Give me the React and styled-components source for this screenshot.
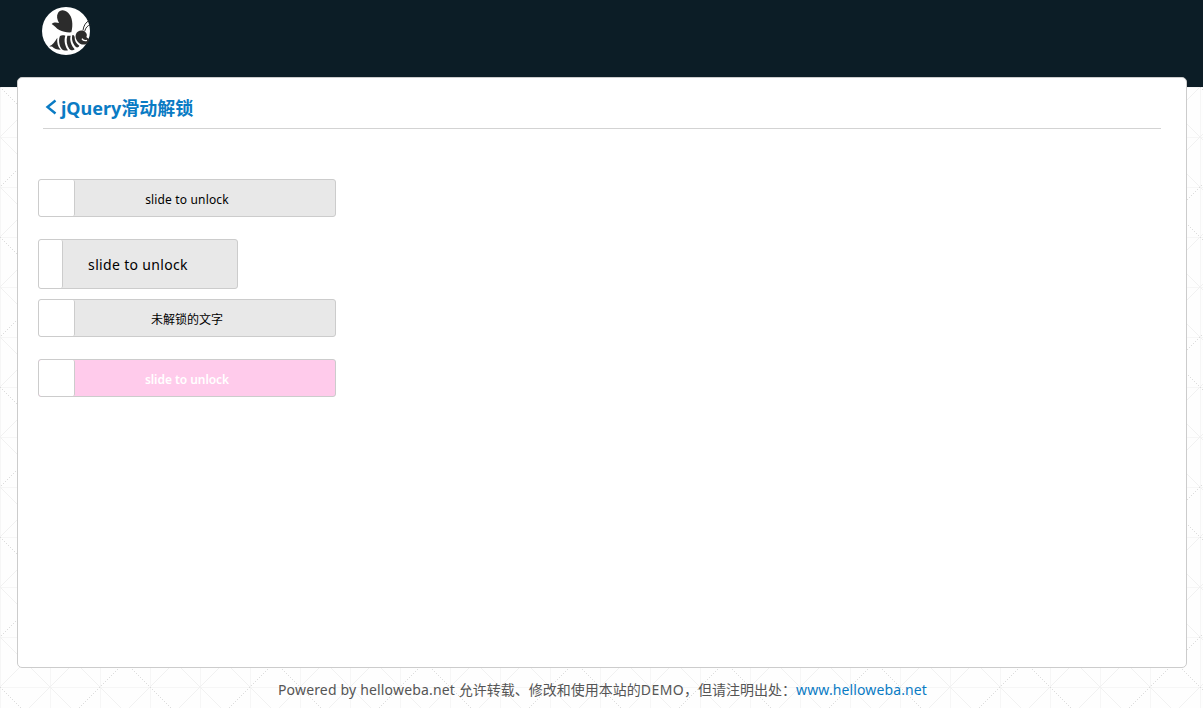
import React from "react";
import styled, { createGlobalStyle } from "styled-components";

const GlobalStyle = createGlobalStyle`
  * { box-sizing: border-box; }
  body {
    margin: 0;
    background: #fefefe;
    color: #555;
    font-family: "Noto Sans", "Noto Sans CJK SC", sans-serif;
    font-size: 14px;
    overflow: hidden;
  }
`;

const Page = styled.div`
  position: relative;
  height: 708px;
  overflow: hidden;
`;

const Backdrop = styled.svg`
  position: absolute;
  inset: 0;
  width: 100%;
  height: 100%;
`;

const Header = styled.header`
  position: relative;
  height: 87px;
  padding: 7px 42px;
  background: #0c1d26;
`;

const Logo = styled.svg`
  display: block;
  width: 49px;
  height: 48px;
`;

const Panel = styled.main`
  position: relative;
  height: 591px;
  margin: -10px 16px 0 17px;
  padding: 17px 25px 0 20px;
  background: #fff;
  border: 1px solid #ccc;
  border-radius: 5px;
`;

const Title = styled.h1`
  display: flex;
  align-items: center;
  height: 34px;
  margin: 0 0 50px 5px;
  padding: 0 0 7px 2px;
  border-bottom: 1px solid #d3d3d3;
  color: #0a7bc4;
  font-size: 18px;
  line-height: 26px;
  font-weight: 700;
  white-space: nowrap;
`;

const BackIcon = styled.svg`
  width: 13px;
  height: 16px;
  margin: 0 3px 3px 0;
`;

const Track = styled.div`
  display: flex;
  width: ${(p) => p.$width || 298}px;
  height: ${(p) => p.$height || 38}px;
  margin: 0 0 ${(p) => p.$gap ?? 22}px 0;
  background: ${(p) => p.$bg || "#e8e8e8"};
  border: 1px solid #ccc;
  border-radius: 3px;
  overflow: hidden;
`;

const Handle = styled.div`
  flex: none;
  width: ${(p) => p.$width || 36}px;
  background: #fff;
  border-right: 1px solid #ccc;
  border-radius: 2px;
`;

const Label = styled.span`
  flex: 1;
  margin-left: -${(p) => p.$pull || 36}px;
  padding-top: 2px;
  color: ${(p) => p.$color || "#000"};
  font-size: ${(p) => p.$size || 12}px;
  font-weight: ${(p) => p.$weight || 400};
  letter-spacing: ${(p) => p.$spacing || 0}px;
  line-height: ${(p) => p.$line || 36}px;
  text-align: center;
`;

const Footer = styled.footer`
  position: relative;
  display: flex;
  justify-content: center;
  padding: 11px 0 0 2px;
  line-height: 22px;
  white-space: pre;
`;

const Latin = styled.span`
  letter-spacing: ${(p) => p.$spacing || 0.17}px;
`;

const Link = styled.a`
  color: #0a7bc4;
  text-decoration: none;
  letter-spacing: 0.12px;
`;

function Slider({ children, width, height, gap, bg, handle, ...label }) {
  return (
    <Track $width={width} $height={height} $gap={gap} $bg={bg}>
      <Handle $width={handle} />
      <Label
        $pull={handle}
        $size={label.size}
        $color={label.color}
        $weight={label.weight}
        $spacing={label.spacing}
        $line={label.line}
      >
        {children}
      </Label>
    </Track>
  );
}

function Bee() {
  return (
    <Logo viewBox="6 6 147 144">
      <circle cx="78" cy="78" r="72" fill="#fff" />
      <g fill="#2c2c2c">
        <path d="M54 24C60 13 74 13 85 24C97 36 100 58 94 82C84 83 68 81 58 75C49 70 44 63 35 57C41 51 50 52 57 54C51 43 49 33 54 24Z" />
        <path d="M28 124C38 120 45 109 52 98C50 113 54 126 62 134C51 134 42 131 37 125C34 124 31 125 28 124Z" />
        <path d="M60 93C65 90 71 91 76 92C71 106 75 123 84 136C77 138 69 136 65 132C57 121 55 104 60 93Z" />
        <path d="M82 92H92C88 106 94 121 104 133C99 138 92 136 88 132C80 121 78 105 82 92Z" />
        <path d="M97 91C100 89 103 92 104 96C103 107 109 116 118 122C116 127 111 129 107 125C98 116 94 103 97 91Z" />
        <path d="M108 87C112 76 127 73 136 81C142 87 141 92 139 96C142 100 146 101 148 102C148 106 147 109 145 111C141 119 130 121 120 116C110 109 104 97 108 87Z" />
      </g>
      <g fill="none" stroke="#2c2c2c" strokeWidth="3">
        <path d="M129 76C131 62 137 51 149 46" />
        <path d="M134 79C137 67 143 62 151 59" />
      </g>
      <path d="M126 101Q130 109 141 106" fill="none" stroke="#fff" strokeWidth="4" />
    </Logo>
  );
}

function Lattice() {
  const steps = [0, 50, 100];
  return (
    <Backdrop aria-hidden="true">
      <defs>
        <pattern id="lattice" x="0" y="87" width="150" height="150" patternUnits="userSpaceOnUse">
          <g fill="none" stroke="#f6f6f6">
            {steps.map((s) => (
              <path key={s} d={`M${s + 0.5} 0V150M0 ${s + 0.5}H150`} />
            ))}
          </g>
          <path
            d="M50 0L150 100M100 0L150 50M0 50L100 150M0 100L50 150M50 0L0 50M150 50L50 150M150 0L0 150"
            fill="none"
            stroke="#f1f1f1"
          />
          <path d="M0 0L150 150M100 0L0 100M150 100L100 150" stroke="#dcdcdc" strokeDasharray="1.414 1.414" />
        </pattern>
      </defs>
      <rect width="100%" height="100%" fill="url(#lattice)" />
    </Backdrop>
  );
}

export default function App() {
  return (
    <Page>
      <GlobalStyle />
      <Lattice />
      <Header>
        <Bee />
      </Header>
      <Panel>
        <Title>
          <BackIcon viewBox="0 0 13 16">
            <path d="M10.5 1.5L2.5 8L10.5 14.5" fill="none" stroke="#0a7bc4" strokeWidth="2.4" />
          </BackIcon>
          jQuery滑动解锁
        </Title>
        <Slider spacing={0.16}>slide to unlock</Slider>
        <Slider width={200} height={50} gap={10} handle={24} size={14} line={46} spacing={0.33}>
          slide to unlock
        </Slider>
        <Slider>未解锁的文字</Slider>
        <Slider bg="#ffcbeb" color="#fff" weight={600} spacing={-0.05}>
          slide to unlock
        </Slider>
      </Panel>
      <Footer>
        <Latin>Powered by helloweba.net </Latin>
        <span>
          允许转载、修改和使用本站的<Latin $spacing={0.4}>DEMO</Latin>，但请注明出处：
        </span>
        <Link href="#">www.helloweba.net</Link>
      </Footer>
    </Page>
  );
}
